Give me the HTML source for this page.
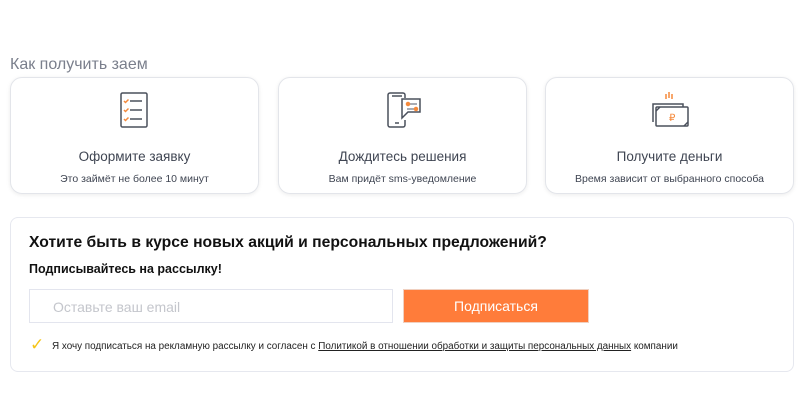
<!DOCTYPE html>
<html><head><meta charset="utf-8"><style>
*{margin:0;padding:0;box-sizing:border-box}
body{width:800px;height:414px;background:#fff;font-family:"Liberation Sans",sans-serif;position:relative;overflow:hidden}
.h{position:absolute;left:10px;top:56px;font-size:16px;color:#7a7f8c;font-weight:300}
.card{position:absolute;top:77px;width:249px;height:117px;border:1px solid #e3e5ea;border-radius:12px;box-shadow:0 1px 4px rgba(0,0,0,.08);text-align:center}
.card svg{position:absolute;left:50%;top:12px;margin-left:-20px}
.t{position:absolute;top:71px;width:100%;font-size:13.5px;color:#3f4552}
.s{position:absolute;top:95px;width:100%;font-size:10.5px;color:#3f4552}
.box{position:absolute;left:10px;top:217px;width:784px;height:155px;border:1px solid #e6e8ef;border-radius:8px}
.bh{position:absolute;left:18px;top:16px;font-size:15.7px;font-weight:bold;color:#111}
.bs{position:absolute;left:18px;top:44px;font-size:12.5px;font-weight:bold;color:#111}
.in{position:absolute;left:18px;top:71px;width:364px;height:34px;border:1px solid #e3e5ee;font-size:14px;color:#c4c6cc;padding:9px 0 0 23px}
.btn{position:absolute;left:392px;top:71px;width:186px;height:34px;background:#ff7c3a;border:1px solid #f0d0c0;color:#fff;font-size:14px;text-align:center;line-height:32px}
.ck{position:absolute;left:19px;top:117px;color:#f5c518;font-size:17px}
.ct{position:absolute;left:41px;top:123px;font-size:9.9px;color:#222}
.ct u{color:#222}
</style></head><body>
<div class="h">Как получить заем</div>
<div class="card" style="left:10px">
<svg width="40" height="40" viewBox="0 0 40 40" fill="none" stroke="#4a505c" stroke-width="1.5"><rect x="6" y="3" width="26" height="34" rx="1.5"/><path d="M15 11h12M15 20h12M15 29h12"/><path d="M9 11l1.5 1.5 3-3M9 20l1.5 1.5 3-3M9 29l1.5 1.5 3-3" stroke="#f58a3c"/></svg>
<div class="t">Оформите заявку</div><div class="s">Это займёт не более 10 минут</div></div>
<div class="card" style="left:278px">
<svg width="40" height="40" viewBox="0 0 40 40" fill="none" stroke="#4a505c" stroke-width="1.5"><path d="M22 30v5a2 2 0 0 1-2 2H7a2 2 0 0 1-2-2V5a2 2 0 0 1 2-2h13a2 2 0 0 1 2 2v3"/><path d="M9 6h10M12 33h4"/><path d="M19 9h18v13H25l-6 6z"/><path d="M24 14h10M24 19h10" stroke="#8b919b"/><circle cx="25" cy="14" r="1.5" fill="#f58a3c" stroke="#f58a3c"/><circle cx="33" cy="19" r="1.5" fill="#f58a3c" stroke="#f58a3c"/></svg>
<div class="t">Дождитесь решения</div><div class="s">Вам придёт sms-уведомление</div></div>
<div class="card" style="left:545px">
<svg width="40" height="40" viewBox="0 0 40 40" fill="none" stroke="#4a505c" stroke-width="1.5"><path d="M3 32V14h30v3"/><rect x="6" y="17" width="32" height="19" rx="1"/><path d="M6 21l4-4M34 36l4-4"/><path d="M16 4v5M19 2v6M22 4v5" stroke="#f58a3c"/><text x="19" y="31" font-size="10" fill="#f58a3c" stroke="none" font-family="Liberation Sans">₽</text></svg>
<div class="t">Получите деньги</div><div class="s">Время зависит от выбранного способа</div></div>
<div class="box">
<div class="bh">Хотите быть в курсе новых акций и персональных предложений?</div>
<div class="bs">Подписывайтесь на рассылку!</div>
<div class="in">Оставьте ваш email</div>
<div class="btn">Подписаться</div>
<div class="ck">✓</div>
<div class="ct">Я хочу подписаться на рекламную рассылку и согласен с <u>Политикой в отношении обработки и защиты персональных данных</u> компании</div>
</div>
</body></html>
